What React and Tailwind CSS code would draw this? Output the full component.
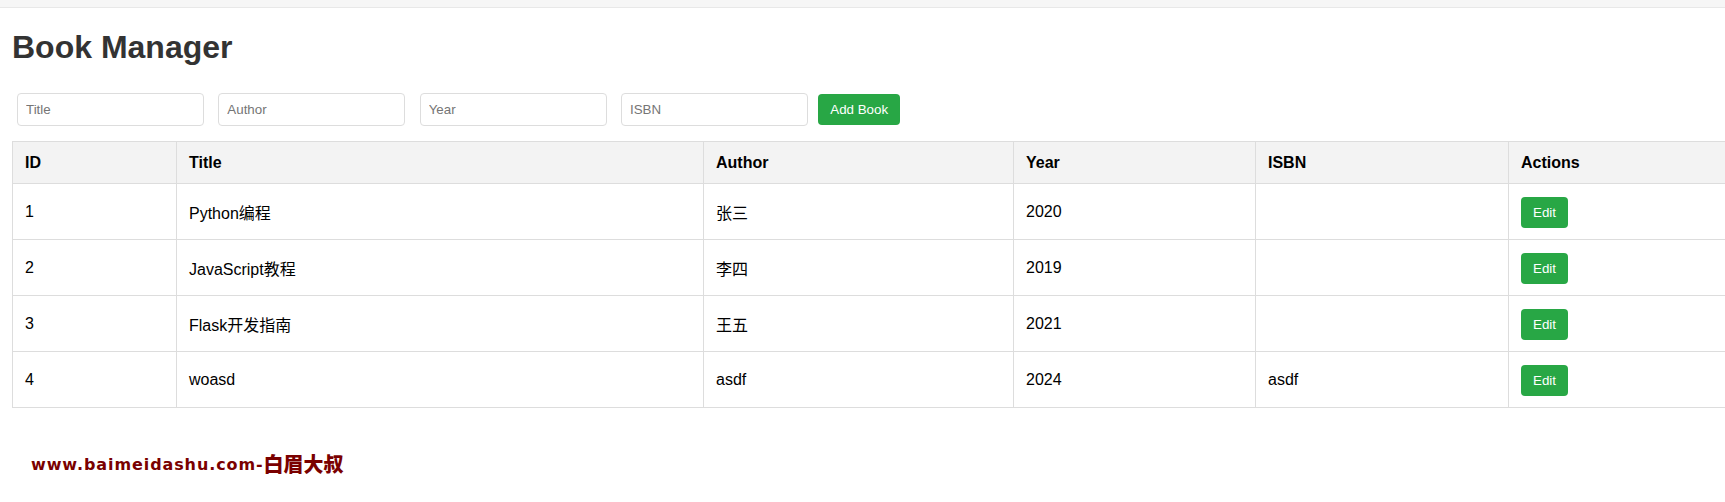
const books = [
  { id: 1, title: "Python编程", author: "张三", year: 2020, isbn: "" },
  { id: 2, title: "JavaScript教程", author: "李四", year: 2019, isbn: "" },
  { id: 3, title: "Flask开发指南", author: "王五", year: 2021, isbn: "" },
  { id: 4, title: "woasd", author: "asdf", year: 2024, isbn: "asdf" },
];

const inputClass =
  "w-[187px] h-[33px] px-2 ml-[5px] mr-[9.33px] border border-[#ddd] rounded text-[13.33px] bg-white placeholder:text-[#757575]";
const thClass = "border border-[#ddd] px-3 py-[11.5px] text-left text-base leading-[normal] font-bold text-black bg-[#f3f3f3]";
const tdClass = "border border-[#ddd] px-3 py-3 text-left text-base leading-[normal] text-black h-[56px]";

function App() {
  return (
    <div className="w-[1725px] h-[502px] overflow-hidden bg-white font-['Liberation_Sans','Noto_Sans_CJK_SC',sans-serif]">
      <div className="h-2 bg-[#f6f6f6] border-b border-[#e8e8e8]"></div>
      <div className="pl-3">
        <h1 className="pt-[21px] h-[70px] text-[32px] leading-[37px] font-bold text-[#333]">Book Manager</h1>
        <form className="flex items-center h-[33px] mt-[15px]">
          <input className={inputClass} placeholder="Title" />
          <input className={inputClass} placeholder="Author" />
          <input className={inputClass} placeholder="Year" />
          <input className={inputClass} placeholder="ISBN" />
          <button type="button" className="ml-px h-[31px] px-3 rounded bg-[#28a745] text-white text-[13.33px]">
            Add Book
          </button>
        </form>
        <table className="mt-[15px] w-[1730px] table-fixed border-collapse">
          <colgroup>
            <col className="w-[164px]" />
            <col className="w-[527px]" />
            <col className="w-[310px]" />
            <col className="w-[242px]" />
            <col className="w-[253px]" />
            <col />
          </colgroup>
          <thead>
            <tr>
              <th className={thClass}>ID</th>
              <th className={thClass}>Title</th>
              <th className={thClass}>Author</th>
              <th className={thClass}>Year</th>
              <th className={thClass}>ISBN</th>
              <th className={thClass}>Actions</th>
            </tr>
          </thead>
          <tbody>
            {books.map((book) => (
              <tr key={book.id}>
                <td className={tdClass}>{book.id}</td>
                <td className={tdClass}>{book.title}</td>
                <td className={tdClass}>{book.author}</td>
                <td className={tdClass}>{book.year}</td>
                <td className={tdClass}>{book.isbn}</td>
                <td className="border border-[#ddd] px-3 pt-[13px] pb-[11px] text-left text-black h-[56px]">
                  <button type="button" className="block h-[31px] px-3 rounded bg-[#28a745] text-white text-[13.33px]">
                    Edit
                  </button>
                </td>
              </tr>
            ))}
          </tbody>
        </table>
        <p className="mt-[45px] ml-[19px] h-6 flex items-center font-['DejaVu_Sans','Noto_Sans_CJK_SC',sans-serif] font-bold text-[#7a0000]">
          <span className="text-[16px] tracking-[0.9px]">www.baimeidashu.com-</span>
          <span className="text-[20px] font-black">白眉大叔</span>
        </p>
      </div>
    </div>
  );
}

export default App;
